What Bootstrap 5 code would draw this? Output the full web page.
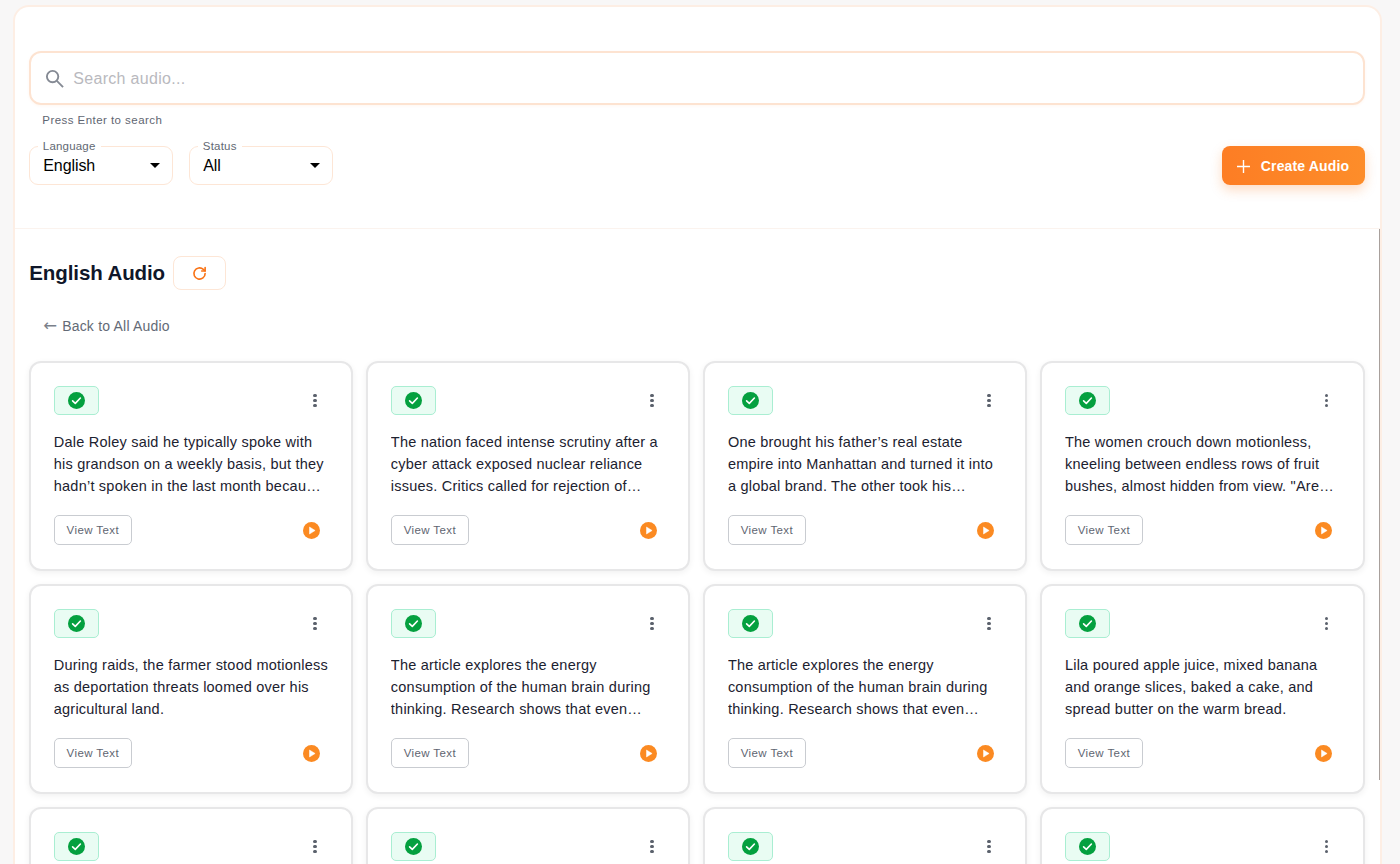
<!DOCTYPE html>
<html lang="en">
<head>
<meta charset="utf-8">
<title>English Audio</title>
<link href="https://cdn.jsdelivr.net/npm/bootstrap@5.3.0/dist/css/bootstrap.min.css" rel="stylesheet">
<style>
html,body{height:864px;overflow:hidden}
body{background:#f8f7f7;font-family:"Liberation Sans",Arial,sans-serif;color:#111827}
.shell{margin:5px 18px 0 13px;background:#fff;border:2px solid #fdeee4;border-bottom:0;border-radius:16px 16px 0 0;height:859px;overflow:hidden;position:relative}
.top-panel{height:222px;padding:44px 15.5px 0 14.3px;border-bottom:1px solid #fbf3ee}
.search-box{height:54px;border:2px solid #fde3d1;border-radius:12px;padding:0 14px;gap:9px;box-shadow:0 1px 3px rgba(249,115,22,.06)}
.search-box input{border:0;outline:0;flex:1;font-size:16px;letter-spacing:.3px;background:transparent;padding:2px 0 0;color:#111827}
.search-box input::placeholder{color:#b9b9be;opacity:1}
.hint{font-size:11.5px;letter-spacing:.45px;color:#5f6672;margin:8px 0 0 13px;line-height:14px}
.picker{width:144px;height:39px;border:1px solid #fde6d6;border-radius:9px;padding:0 13px;position:relative;font-size:16px;letter-spacing:-.1px;color:#000}
.picker-label{position:absolute;left:7.5px;top:-8px;background:#fff;padding:0 5px;font-size:11.5px;line-height:14px;color:#626873;letter-spacing:.2px}
.caret-down{width:0;height:0;border:5px solid transparent;border-top-color:#000;border-bottom:0;margin-right:-1px}
.btn-create{height:39px;width:143px;background:linear-gradient(90deg,#fd7d24,#fd8d2a);color:#fff;border:0;border-radius:8px;font-size:14px;font-weight:700;letter-spacing:.15px;box-shadow:0 5px 12px rgba(249,115,22,.25);gap:11px;padding:1px 0 0}
.btn-create:hover{background:#fd8020;color:#fff}
.filters{margin-top:19px}
.list-area{padding:27px 15.5px 0 14.3px}
.heading{font-size:20.5px;font-weight:700;color:#0f172a;margin:0;letter-spacing:-.1px;line-height:34px}
.btn-refresh{width:53px;height:34px;border:1px solid #fde6d6;border-radius:8px;background:#fff;padding:0}
.back-link{font-size:14px;color:#636a76;letter-spacing:.2px;margin:27px 0 0 14px;line-height:18px;text-decoration:none;display:flex;gap:5px;align-items:center}
.back-arrow{font-family:"DejaVu Sans",sans-serif;font-size:16.5px;letter-spacing:0;color:#7a808a}
.audio-grid{display:grid;grid-template-columns:repeat(4,1fr);gap:13px;margin-top:26px}
.audio-item{height:210px;border:2px solid #e7e7e8;border-radius:12px;background:#fff;padding:23px 20px 0 22.5px;box-shadow:0 2px 6px rgba(0,0,0,.06)}
.done-tag{width:45px;height:29px;background:#e9fcf3;border:1px solid #a9eed2;border-radius:5px}
.dots{margin-right:15px;gap:2.2px;width:3px}
.dots i{display:block;width:3.2px;height:3.2px;border-radius:50%;background:#5b616c}
.audio-text{font-size:14.5px;line-height:22px;letter-spacing:.22px;color:#1c2230;margin:15.5px 0 0;height:66px;overflow:hidden}
.btn-view{width:78px;height:30px;border:1px solid #c9ccd1;border-radius:5px;background:#fff;font-size:11.5px;letter-spacing:.4px;color:#5f6672;padding:1px 0 0}
.btn-view:hover{background:#fff;color:#5f6672;border-color:#c9ccd1}
.bottom-row{margin-top:18.5px}
.play-ic{margin-right:11px}
.side-bar{position:absolute;right:0;top:222px;width:1.5px;height:551px;background:#a8a09c}
</style>
</head>
<body>
<div class="shell">
  <div class="top-panel">
    <div class="search-box d-flex align-items-center">
      <svg width="19" height="19" viewBox="0 0 20 20" fill="none" stroke="#858a94" stroke-width="2"><circle cx="8" cy="8" r="6"/><path d="M12.5 12.5 19 19"/></svg>
      <input type="text" placeholder="Search audio..." aria-label="Search audio">
    </div>
    <div class="hint">Press Enter to search</div>
    <div class="filters d-flex align-items-center gap-3">
      <div class="picker d-flex align-items-center justify-content-between"><span class="picker-label">Language</span>English<span class="caret-down"></span></div>
      <div class="picker d-flex align-items-center justify-content-between"><span class="picker-label">Status</span>All<span class="caret-down"></span></div>
      <button class="btn btn-create ms-auto d-flex align-items-center justify-content-center" type="button">
        <svg width="13" height="13" viewBox="0 0 13 13" stroke="#fff" stroke-width="1.4"><path d="M6.5 0v13M0 6.5h13"/></svg>Create Audio
      </button>
    </div>
  </div>
  <div class="list-area">
    <div class="d-flex align-items-center gap-2">
      <h1 class="heading">English Audio</h1>
      <button class="btn btn-refresh d-flex align-items-center justify-content-center" type="button" aria-label="Refresh">
        <svg width="15" height="15" viewBox="0 0 24 24" fill="none" stroke="#f97316" stroke-width="2.6" stroke-linecap="round" stroke-linejoin="round"><path d="M21 12a9 9 0 1 1-2.8-6.5L21 8"/><path d="M21 2.5V8h-5.5"/></svg>
      </button>
    </div>
    <a class="back-link" href="#"><span class="back-arrow">&larr;</span>Back to All Audio</a>
    <div class="audio-grid" id="audioGrid"></div>
  </div>
  <div class="side-bar"></div>
</div>
<template id="itemTpl">
  <div class="audio-item">
    <div class="d-flex align-items-center justify-content-between">
      <span class="done-tag d-flex align-items-center justify-content-center">
        <svg width="17" height="17" viewBox="0 0 17 17"><circle cx="8.5" cy="8.5" r="8.5" fill="#04a03f"/><path d="M4.6 8.8 7.3 11.4 12.4 6" fill="none" stroke="#fff" stroke-width="1.6" stroke-linecap="round" stroke-linejoin="round"/></svg>
      </span>
      <span class="dots d-flex flex-column"><i></i><i></i><i></i></span>
    </div>
    <p class="audio-text"></p>
    <div class="bottom-row d-flex align-items-center justify-content-between">
      <button class="btn btn-view" type="button">View Text</button>
      <svg class="play-ic" width="17" height="17" viewBox="0 0 17 17"><circle cx="8.5" cy="8.5" r="8.5" fill="#fb8a22"/><path d="M6.5 5v7l5.6-3.5z" fill="#fff" stroke="#fff" stroke-width=".5" stroke-linejoin="round"/></svg>
    </div>
  </div>
</template>
<script>
const items=[
"Dale Roley said he typically spoke with his grandson on a weekly basis, but they hadn’t spoken in the last month becau…",
"The nation faced intense scrutiny after a cyber attack exposed nuclear reliance issues. Critics called for rejection of…",
"One brought his father’s real estate empire into Manhattan and turned it into a global brand. The other took his…",
"The women crouch down motionless, kneeling between endless rows of fruit bushes, almost hidden from view. \"Are…",
"During raids, the farmer stood motionless as deportation threats loomed over his agricultural land.",
"The article explores the energy consumption of the human brain during thinking. Research shows that even…",
"The article explores the energy consumption of the human brain during thinking. Research shows that even…",
"Lila poured apple juice, mixed banana and orange slices, baked a cake, and spread butter on the warm bread.",
"","","",""];
const g=document.getElementById('audioGrid'),t=document.getElementById('itemTpl');
items.forEach(s=>{const n=t.content.cloneNode(true);n.querySelector('.audio-text').textContent=s;g.appendChild(n)});
</script>
<script src="https://cdn.jsdelivr.net/npm/bootstrap@5.3.0/dist/js/bootstrap.bundle.min.js"></script>
</body>
</html>
